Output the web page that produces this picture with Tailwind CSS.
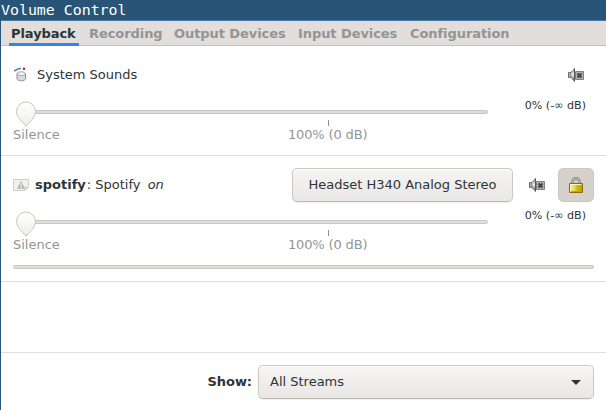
<!DOCTYPE html>
<html lang="en">
<head>
<meta charset="utf-8">
<title>Volume Control</title>
<script src="https://cdn.jsdelivr.net/npm/@tailwindcss/browser@4"></script>
</head>
<body class="w-[606px] h-[410px] overflow-hidden bg-white font-['DejaVu_Sans',sans-serif] text-[13px] leading-4 text-[#2e3436] whitespace-nowrap">
<svg class="absolute w-0 h-0">
  <defs>
    <linearGradient id="knob" x1="0" y1="0" x2="0" y2="1"><stop offset="0" stop-color="#fff"/><stop offset="1" stop-color="#ededeb"/></linearGradient>
    <linearGradient id="cone" x1="0" y1="0" x2="0" y2="1"><stop offset="0" stop-color="#6b6d66"/><stop offset=".45" stop-color="#f4f4f2"/><stop offset="1" stop-color="#4c4e48"/></linearGradient>
    <linearGradient id="gold" x1="0" y1="0" x2="1" y2="0"><stop offset="0" stop-color="#f7ee91"/><stop offset=".35" stop-color="#eee35b"/><stop offset=".6" stop-color="#cdb90c"/><stop offset="1" stop-color="#b8a100"/></linearGradient>
    <symbol id="pin" viewBox="0 0 22 27"><path d="M11 25.200C8 21.200 1.500 16.500 1.500 10.500a9.500 9.500 0 0 1 19 0C20.500 16.500 14 21.200 11 25.200Z" fill="url(#knob)" stroke="#c9c2bd"/></symbol>
    <symbol id="muted" viewBox="0 0 16 16">
      <path d="M.5 5.500h2.500v5H.5Z" fill="#babdb6" stroke="#666862"/>
      <path d="M3 5 6.500 1.500v13L3 11Z" fill="url(#cone)" stroke="#888a85" stroke-width=".7"/>
      <path d="M6.500 1.500v13" stroke="#555753"/>
      <path d="M7.500 4.500h8v8h-8Z" fill="#aeb0a9" stroke="#80827d"/>
      <path d="m9.500 6.500 4 4m0-4-4 4" stroke="#41443f" stroke-width="1.900"/>
    </symbol>
  </defs>
</svg>
<main class="h-full border-l border-[#285577] flex flex-col">
  <header class="h-[21px] shrink-0 bg-[#285577] border-b border-[#4c7899] text-white font-['DejaVu_Sans_Mono',monospace] text-[14.9px] leading-5">Volume Control</header>
  <nav class="h-[25px] shrink-0 bg-[#e1dedb] border-b border-[#c3c0bd] pl-2 flex font-bold text-[#929595] leading-[25px] tracking-[-0.07px]">
    <div class="w-[70px] h-[25px] pl-0.5 mr-[10px] border-b-3 border-[#3584e4] text-[#2e3436]">Playback</div>
    <div class="w-[85px]">Recording</div>
    <div class="w-[124px]">Output Devices</div>
    <div class="w-[112px]">Input Devices</div>
    <div>Configuration</div>
  </nav>

  <section class="h-[110px] shrink-0 border-b border-[#dedede] px-3 pt-3">
    <div class="h-[34px] flex items-center">
      <svg class="w-4 h-4 mr-2" viewBox="0 0 16 16">
        <path d="M1 4 5 2l3-.7" fill="none" stroke="#5680b7" stroke-width="1.500"/><path d="M10 .8h2v2h-2Z" fill="#c00"/>
        <path d="M4 6.500v5c0 3 8.500 3 8.500 0v-5Z" fill="#e3e3df" stroke="#888a85"/>
        <ellipse cx="8.200" cy="6.700" rx="4.200" ry="1.900" fill="#f6f6f4" stroke="#a2a49f"/>
        <path d="m5 7 4-3M6 9v4m2-3v4m2-4v3" stroke="#c5c7c3" stroke-width=".7"/>
      </svg>
      <span class="grow">System Sounds</span>
      <svg class="w-4 h-4 mr-[10px]"><use href="#muted"/></svg>
    </div>
    <div class="flex justify-between">
      <div class="w-[475px] h-[52px] relative">
        <div class="ml-2 mt-[18px] h-1 border border-[#c7c6bd] bg-[#dddbd7] rounded-full"></div>
        <div class="absolute left-[315px] top-7 w-px h-1.5 bg-[#8d9091]"></div>
        <svg class="absolute left-[2px] top-[9px] w-[22px] h-[27px]"><use href="#pin"/></svg>
        <div class="flex mt-[13px] text-[#929595]"><span class="w-[275px]">Silence</span><span class="tracking-[-0.15px]">100% (0 dB)</span></div>
      </div>
      <div class="mt-1.5 mr-2 text-[11.111px]">0% (-∞ dB)</div>
    </div>
  </section>

  <section class="h-[126px] shrink-0 border-b border-[#dedede] px-3 pt-3">
    <div class="h-[34px] flex items-center">
      <svg class="w-4 h-4 mr-1.5" viewBox="0 0 16 16">
        <path d="M.5 2.500h15v8l-3.500 3H.5Z" fill="#f0f0ef" stroke="#cececb"/><path d="M12 13v-2.500h3" fill="none" stroke="#c8c8c5"/>
        <path d="M8 4.500 11.500 11.500H4.500Z" fill="#bcbcba" stroke="#bcbcba" stroke-linejoin="round"/><path d="M8 6v3m0 1v1.300" stroke="#f4f4f2" stroke-width="1.200"/>
      </svg>
      <span class="w-[257px]"><b>spotify</b><span class="ml-px">:</span> Spotify <i class="ml-[3px]">on</i></span>
      <button class="w-[221px] h-[34px] rounded-[5px] border border-[#cdc7c2] border-b-[#bfb8b1] bg-linear-to-b from-[#f6f5f4] to-[#e9e7e6] shadow-[inset_0_1px_white,0_1px_2px_#00000012]">Headset H340 Analog Stereo</button>
      <svg class="w-4 h-4 ml-4 mr-[13px]"><use href="#muted"/></svg>
      <button class="w-9 h-[34px] rounded-[5px] border border-[#cdc7c2] bg-[#d6d1cd] flex items-center justify-center">
        <svg class="w-4 h-4" viewBox="0 0 16 16">
          <path d="M4.500 7V5a3.500 3.500 0 0 1 7 0v2" fill="none" stroke="#888a85" stroke-width="2.800"/><path d="M4.500 7V5a3.500 3.500 0 0 1 7 0v2" fill="none" stroke="#c6cac2"/>
          <path d="M1.500 6.500h13v9h-13Z" fill="url(#gold)" stroke="#8f6b06"/><path d="M2.500 15V7.500h11" fill="none" stroke="#fcf7bd"/><path d="M3 14.500h11" stroke="#bca500"/>
        </svg>
      </button>
    </div>
    <div class="flex justify-between">
      <div class="w-[475px] h-[52px] relative">
        <div class="ml-2 mt-[18px] h-1 border border-[#cdc7c2] bg-[#e1dedb] rounded-full"></div>
        <div class="absolute left-[315px] top-7 w-px h-1.5 bg-[#8d9091]"></div>
        <svg class="absolute left-[2px] top-[9px] w-[22px] h-[27px]"><use href="#pin"/></svg>
        <div class="flex mt-[13px] text-[#929595]"><span class="w-[275px]">Silence</span><span class="tracking-[-0.15px]">100% (0 dB)</span></div>
      </div>
      <div class="mt-1.5 mr-2 text-[11.111px]">0% (-∞ dB)</div>
    </div>
    <div class="mt-[11px] h-1 border border-[#cdc7c2] bg-[#e1dedb] rounded-full"></div>
  </section>
  <div class="grow"></div>
  <footer class="h-[58px] shrink-0 border-t border-[#dedede] px-3 pt-3 flex justify-end">
    <b class="mr-1.5 mt-[9px] tracking-[-0.07px]">Show:</b>
    <div class="w-[336px] h-[34px] rounded-[5px] border border-[#cdc7c2] border-b-[#bfb8b1] bg-linear-to-b from-[#f6f5f4] to-[#e9e7e6] shadow-[inset_0_1px_white,0_1px_2px_#00000012] flex items-center justify-between pl-[11px] pr-3">
      <span>All Streams</span>
      <svg class="w-[10px] h-[5px]" viewBox="0 0 10 5"><path d="M0 0h10L5 5Z" fill="#2e3436"/></svg>
    </div>
  </footer>
</main>
</body>
</html>
